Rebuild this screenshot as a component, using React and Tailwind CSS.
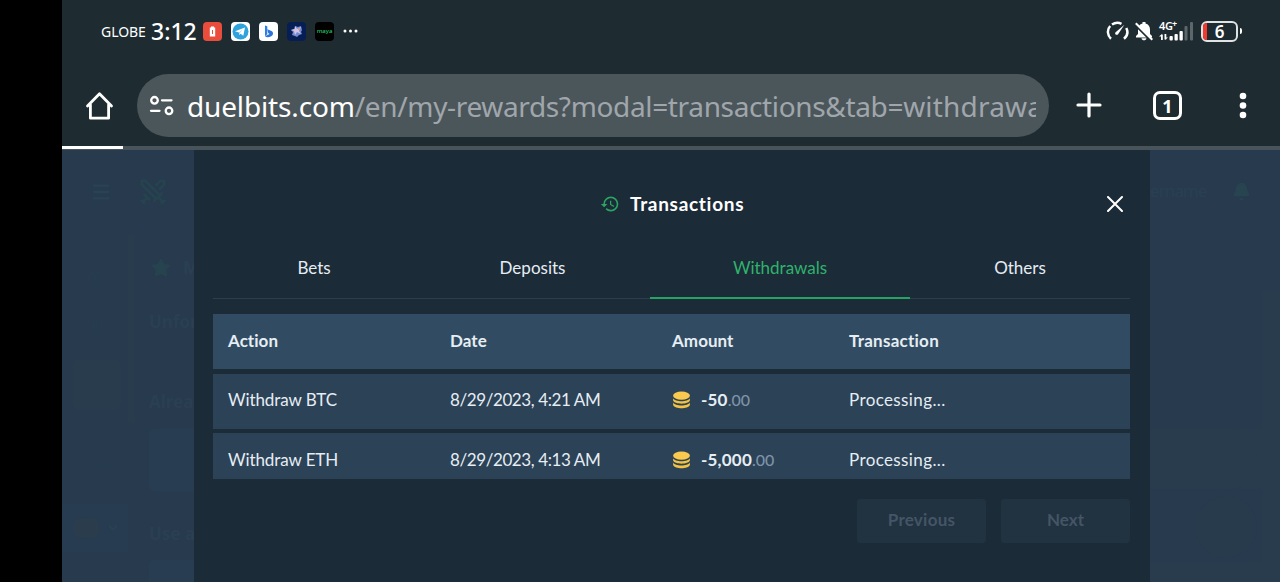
import { Menu, Star, Bell, ChevronDown, Swords, Gift, CircleUser } from 'lucide-react';
import { MdOutlineHistory } from 'react-icons/md';

const tabs = [
  { label: 'Bets', width: 'w-[202px]' },
  { label: 'Deposits', width: 'w-[235px]' },
  { label: 'Withdrawals', width: 'w-[260px]', active: true },
  { label: 'Others', width: 'w-[220px]' },
];

const rows = [
  { action: 'Withdraw BTC', date: '8/29/2023, 4:21 AM', whole: '-50', cents: '.00', status: 'Processing...' },
  { action: 'Withdraw ETH', date: '8/29/2023, 4:13 AM', whole: '-5,000', cents: '.00', status: 'Processing...' },
];

const columns = 'grid grid-cols-[222px_222px_177px_296px] items-center pb-[2px] [&>*]:pl-[15px]';

function StatusBar() {
  return (
    <div className="flex h-[62px] items-center pl-[39px] pr-[38px] text-white">
      <span className="w-[50px] whitespace-nowrap text-[14px] tracking-[-0.05px]">GLOBE</span>
      <span className="w-[52px] whitespace-nowrap text-[23px] font-medium leading-none">3:12</span>

      {/* Notification icons */}
      <div className="flex items-center gap-[9px]">
        <svg className="h-[19px] w-[19px]" viewBox="0 0 19 19">
          <rect width="19" height="19" rx="4" fill="#ea4d3c" />
          <path d="M8 4.500h3v1h1.200v9H6.800v-9H8z" fill="#fff" />
          <path d="M9 8h1v4H9z" fill="#ea4d3c" />
        </svg>
        <svg className="h-[19px] w-[19px]" viewBox="0 0 19 19">
          <rect width="19" height="19" rx="4" fill="#fff" />
          <circle cx="9.500" cy="9.500" r="8" fill="#30a3dc" />
          <path d="M4 9.300 14 5.500l-1.700 8.300-2.700-2-1.300 1.300-.4-2.500z" fill="#fff" />
          <path d="m7.900 10.600 4-3.300-3.200 3.900-.4 1.900z" fill="#a9d4ec" />
        </svg>
        <svg className="h-[19px] w-[19px]" viewBox="0 0 19 19">
          <rect width="19" height="19" rx="4" fill="#fff" />
          <path d="M6 3.500 8.300 4.300v8L6 14.300z" fill="#2d7fe8" />
          <path d="m8.300 7.300 4.200 1.600c2.400 1.200 1.800 4.300-.3 5.300-2 1.300-4.600 1.700-6.200.1l4.500-2.300-1.300-1z" fill="#2c73dc" />
        </svg>
        <svg className="h-[19px] w-[19px]" viewBox="0 0 19 19">
          <rect width="19" height="19" rx="4" fill="#071e55" />
          <path d="m4 8 3-1 1-3 3 1 3-1 1 4-1 2 1 2-3 1-2 2-2-1-3-1 1-3z" fill="#738bd3" />
          <path d="m8 4 2 3 4-2-2 4 2 3-4-2-2 3-1-4-3-1 4-1z" fill="#d5c3dd" />
          <circle cx="12" cy="7" r="1" fill="#d88b8c" />
        </svg>
        <span className="flex h-[19px] w-[19px] items-center justify-center rounded-[4px] bg-black text-[6px] font-medium leading-none text-[#27c465]">
          maya
        </span>
        <svg className="h-[4px] w-[15px]" viewBox="0 0 15 4" fill="#fff">
          <circle cx="2" cy="2" r="1.500" />
          <circle cx="7.500" cy="2" r="1.500" />
          <circle cx="13" cy="2" r="1.500" />
        </svg>
      </div>

      {/* Device state */}
      <div className="ml-auto flex items-center">
        <svg className="mr-[6px] h-[20px] w-[23px]" viewBox="0 0 23 20" fill="none" stroke="#fff" strokeWidth="2.500">
          <path d="M5 17.800C1.300 14.500.8 8.500 4.200 5M6 3.500c3-2 6.500-2.200 9.500-.7M20.300 7c2 4 1 8-2.300 10.800" />
          <path d="m9.600 11.200 8.800-7.400-6.300 9.500c-1.700 1.600-4-.7-2.500-2.100z" fill="#fff" stroke="none" />
        </svg>
        <svg className="mr-[6px] h-[20px] w-[18px]" viewBox="0 0 18 20">
          <path d="M7.500 2.500V1h3v1.500c3 .7 4.500 3 4.500 6V13l2 2v1.500H1V15l2-2V8.500c0-3 1.500-5.300 4.500-6zM6.500 17.300h5c-.3 2.700-4.700 2.700-5 0z" fill="#fff" />
          <path d="M0 3.800 16.500 20.300" stroke="#1e2c31" strokeWidth="2" />
          <path d="M.8 2.200 17.300 18.800" stroke="#fff" strokeWidth="2" />
        </svg>
        <div className="relative mr-[7px] h-[20px] w-[35px]">
          <span className="absolute -top-px left-0 text-[11px] font-semibold leading-[12px] tracking-[-0.4px]">4G</span>
          <span className="absolute -top-[2px] left-[13px] text-[9px] font-bold leading-[9px]">+</span>
          <svg className="h-[20px] w-[35px]" viewBox="0 0 35 20" fill="#fff">
            <path d="M2 13.500h1.800V19H2zM0 15.500l3-2.500v2.500zM5.500 13h1.800v5.500H5.500zM9 16.500 6 19v-2.500z" />
            <rect x="10.500" y="15" width="3.300" height="4.500" rx="1" />
            <rect x="15.500" y="13" width="3.300" height="6.500" rx="1" />
            <rect x="20.500" y="10" width="3.300" height="9.500" rx="1" />
            <rect x="25.500" y="5" width="3" height="14.500" rx="1" fill="#5c676b" />
            <rect x="31" y="1" width="3" height="18.500" rx="1" fill="#5c676b" />
          </svg>
        </div>
        <div className="relative flex h-[21px] w-[37px] items-center justify-center overflow-hidden rounded-[6px] border-2 border-[#dfe3e4]">
          <span className="absolute left-0 top-0 h-full w-[4px] bg-[#f03a30]" />
          <span className="text-[17px] font-semibold leading-none">6</span>
        </div>
        <span className="ml-[2px] h-[6px] w-[2px] rounded-r bg-white" />
      </div>
    </div>
  );
}

function AddressBar() {
  return (
    <div className="flex h-[84px] items-start pl-[23px] pt-[12px] text-white">
      <svg className="mt-[16px] h-[31px] w-[30px]" viewBox="0 0 30 31" fill="none" stroke="#fff" strokeWidth="2.800" strokeLinejoin="round" strokeLinecap="round">
        <path d="M2.500 16 14.500 3.800 26.500 16M5.400 14.500v13.700h18.200V14.500" />
      </svg>
      <div className="ml-[22px] flex h-[63px] w-[912px] items-center rounded-full bg-[#4b565b] pl-[12px] pr-[12px]">
        <svg className="h-[22px] w-[26px] shrink-0" viewBox="0 0 26 22" fill="none" stroke="#fff" strokeWidth="2.300" strokeLinecap="round">
          <circle cx="5.500" cy="5.300" r="3.300" />
          <path d="M13 5.300h9.500M2 15.800h8.500" />
          <circle cx="20" cy="15.800" r="3.300" />
        </svg>
        <div className="ml-[12px] w-[849px] overflow-hidden whitespace-nowrap text-[28px] leading-[40px] text-[#a0a6ab]">
          <span className="tracking-[-0.150px] text-white">duelbits.com</span>
          <span className="tracking-[-0.350px]">/en/my-rewards?modal=transactions&amp;tab=</span>
          <span className="tracking-[0.200px]">withdrawals</span>
        </div>
      </div>
      <svg className="ml-[27px] mt-[18px] h-[26px] w-[26px]" viewBox="0 0 26 26" stroke="#fff" strokeWidth="3.200" strokeLinecap="round">
        <path d="M13 2v22M2 13h22" />
      </svg>
      <span className="ml-[51px] mt-[17px] flex h-[29px] w-[29px] items-center justify-center rounded-[7px] border-[3px] border-white text-[18px] font-bold leading-none">
        1
      </span>
      <svg className="ml-[56.500px] mt-[18px] h-[27px] w-[8px]" viewBox="0 0 8 27" fill="#fff">
        <circle cx="4" cy="4" r="3.300" />
        <circle cx="4" cy="13.500" r="3.300" />
        <circle cx="4" cy="23" r="3.300" />
      </svg>
    </div>
  );
}

// Dimmed page behind the modal, left side
function BackdropLeft() {
  return (
    <div className="flex w-[132px] overflow-hidden bg-[#273a4e] text-[#2a4052]">
      <div className="flex w-[66px] shrink-0 flex-col items-center">
        <Menu className="ml-[12px] mt-[31px] h-[22px] w-[22px] text-[#294355]" strokeWidth={2.5} />
        <Gift className="mt-[67px] h-[18px] w-[18px] opacity-40" />
        <CircleUser className="mt-[26px] h-[18px] w-[18px] opacity-40" />
        <div className="ml-[4px] mt-[28px] h-[50px] w-[48px] rounded bg-[#283c4d]" />
        <CircleUser className="ml-[18px] mt-[48px] h-[18px] w-[18px] opacity-30" />
        <div className="mt-[28px] flex h-[48px] w-full items-center bg-[#273c50] pl-[12px]">
          <span className="h-[18px] w-[24px] shrink-0 rounded-sm bg-[#2b3c4c]" />
          <ChevronDown className="ml-[8px] h-[14px] w-[14px] shrink-0 text-[#2b4354]" />
        </div>
      </div>
      <div className="mt-[85px] h-[187px] w-[7px] shrink-0 bg-[#283c4d]" />
      <div className="flex w-[100px] shrink-0 flex-col pl-[14px] text-[17px] font-bold leading-[20px]">
        <Swords className="-ml-[11px] mt-[27px] h-[30px] w-[30px] text-[#26444f]" />
        <div className="mt-[51px] flex items-center">
          <Star className="ml-[2px] h-[20px] w-[20px] text-[#26434f]" fill="currentColor" />
          <span className="ml-[12px]">My</span>
        </div>
        <span className="mt-[34px]">Unfor</span>
        <span className="mt-[60px]">Alread</span>
        <div className="mt-[17px] h-[62px] rounded bg-[#283d51]" />
        <span className="mt-[33px]">Use a</span>
        <div className="mt-[16px] h-[22px] rounded-t bg-[#283d51]" />
      </div>
    </div>
  );
}

// Dimmed page behind the modal, right side
function BackdropRight() {
  return (
    <div className="flex w-[130px] overflow-hidden bg-[#273a4e]">
      <div className="flex w-[112px] flex-col">
        <div className="mt-[28px] flex h-[26px] items-center">
          <span className="text-[17px] tracking-[-0.900px] text-[#2a4052]">ername</span>
          <Bell className="ml-auto mr-[11px] h-[19px] w-[19px] text-[#284451]" fill="currentColor" />
        </div>
        <div className="mt-[225px] flex h-[60px] items-center justify-center bg-[#293c4d] pl-[40px]">
          <span className="h-[62px] w-[62px] shrink-0 rounded-full bg-[#283c4d]" />
        </div>
        <div className="mt-[7px] flex h-[66px] justify-center pl-[40px]">
          <span className="h-[62px] w-[62px] rounded-full bg-[#283b4d]" />
        </div>
        <div className="flex-1 bg-[#283c4d]" />
      </div>
      <div className="mt-[140px] flex-1 bg-[#283c4d]" />
    </div>
  );
}

function Coins() {
  return (
    <svg className="mr-[10px] h-[18px] w-[19px]" viewBox="0 0 19 18" fill="#f4c242">
      <ellipse cx="9.500" cy="4.700" rx="8.400" ry="4.100" fill="#f9ca4d" />
      <path d="M1.100 7.200c1.800 4 15 4 16.800 0v2.300c-1.800 4.200-15 4.200-16.800 0z" />
      <path d="M1.100 11.600c1.800 4 15 4 16.800 0V14c-1.800 4.300-15 4.300-16.800 0z" />
    </svg>
  );
}

function TransactionsModal() {
  return (
    <section className="flex w-[956px] flex-col bg-[#1c2b38] pl-[19px] pr-[20px] font-[Lato,sans-serif] text-[17px] text-[#e6edf3]">
      <header className="flex h-[72px] items-center pt-[36px]">
        <div className="flex flex-1 items-center pl-[387px]">
          <MdOutlineHistory className="h-[20px] w-[20px] text-[#2aa562]" />
          <h1 className="ml-[10px] whitespace-nowrap text-[19px] font-bold tracking-[0.700px] text-white">Transactions</h1>
        </div>
        <svg className="mr-[7px] h-[16px] w-[16px]" viewBox="0 0 16 16" stroke="#fff" strokeWidth="2" strokeLinecap="round">
          <path d="m1 1 14 14M15 1 1 15" />
        </svg>
      </header>

      {/* Tabs */}
      <nav className="mt-[15px] flex h-[62px] shrink-0 border-b border-[#2c3f4f]">
        {tabs.map((tab) => (
          <button
            key={tab.label}
            className={`${tab.width} -mb-px flex justify-center pt-[19px] leading-[24px] ${
              tab.active ? 'border-b-2 border-[#28a263] text-[#2fb36c]' : ''
            }`}
          >
            {tab.label}
          </button>
        ))}
      </nav>

      {/* Table, scrolled area cuts the last row */}
      <div className="mt-[15px] h-[165px] shrink-0 overflow-hidden">
        <div className={`${columns} h-[55px] bg-[#314c62] font-bold tracking-[0.050px]`}>
          <span>Action</span>
          <span>Date</span>
          <span>Amount</span>
          <span className="tracking-[0.250px]">Transaction</span>
        </div>
        {rows.map((row) => (
          <div key={row.action} className={`${columns} mt-[4.500px] h-[55px] bg-[#2b4257]`}>
            <span className="tracking-[-0.100px]">{row.action}</span>
            <span className="tracking-[-0.400px]">{row.date}</span>
            <span className="flex items-center font-bold tracking-[0.200px]">
              <Coins />
              {row.whole}
              <span className="text-[16px] font-medium tracking-normal text-[#7f92a8]">{row.cents}</span>
            </span>
            <span className="tracking-[0.380px]">{row.status}</span>
          </div>
        ))}
      </div>

      <footer className="mt-[20px] flex justify-end gap-[15px] font-bold text-[#445566]">
        <button className="h-[44px] w-[129px] rounded-[3px] bg-[#213240] pb-[2px] tracking-[0.250px]">Previous</button>
        <button className="h-[44px] w-[129px] rounded-[3px] bg-[#213240] pb-[2px]">Next</button>
      </footer>
    </section>
  );
}

export default function App() {
  return (
    <div className="flex h-[582px] w-[1280px] overflow-hidden bg-black pl-[62px] font-['Noto_Sans',sans-serif]">
      <div className="flex flex-1 flex-col bg-[#1e2c31]">
        <StatusBar />
        <AddressBar />
        <div className="h-[4px] shrink-0 bg-[#48545a]">
          <div className="h-[3px] w-[61px] bg-white" />
        </div>
        <main className="flex min-h-0 flex-1">
          <BackdropLeft />
          <TransactionsModal />
          <BackdropRight />
        </main>
      </div>
    </div>
  );
}
